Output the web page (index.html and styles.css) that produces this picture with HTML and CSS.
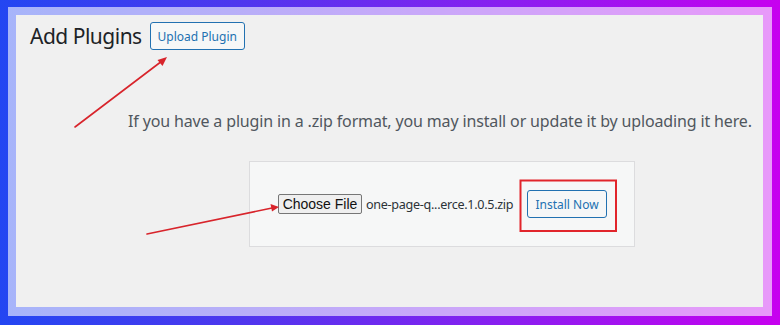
FILE: index.html
```html
<!DOCTYPE html>
<html lang="en">
<head>
<meta charset="utf-8">
<title>Add Plugins</title>
<link rel="stylesheet" href="styles.css">
</head>
<body>
<div class="page">
  <div class="frame">
    <div class="title-row">
      <h1 class="title">Add Plugins</h1>
      <button class="wp-btn upload-btn" type="button">Upload Plugin</button>
    </div>
    <p class="help">If you have a plugin in a .zip format, you may install or update it by uploading it here.</p>
    <form class="upload-form">
      <button class="file-btn" type="button">Choose File</button>
      <span class="file-name">one-page-q...erce.1.0.5.zip</span>
      <button class="wp-btn install-btn" type="button">Install Now</button>
    </form>
  </div>
  <svg class="notes" width="780" height="325" viewBox="0 0 780 325" aria-hidden="true">
    <g stroke="#d8242b" stroke-width="1.6" fill="none" stroke-linecap="round">
      <line x1="75" y1="127" x2="162" y2="61"/>
      <line x1="147" y1="234" x2="272" y2="208"/>
    </g>
    <g fill="#d8242b">
      <polygon points="167,57 157.5,60 162.5,66"/>
      <polygon points="279,207 270.5,204 272,211.5"/>
    </g>
    <rect x="520.5" y="180.5" width="95.5" height="50.5" fill="none" stroke="#e1252b" stroke-width="2"/>
  </svg>
</div>
</body>
</html>
```
FILE: styles.css
```css
* { box-sizing: border-box; }
html, body { margin: 0; padding: 0; }
body {
  width: 780px;
  height: 325px;
  overflow: hidden;
  font-family: "Noto Sans", "Open Sans", sans-serif;
}
.page {
  position: relative;
  width: 780px;
  height: 325px;
  padding: 7px 8px 9px 8px;
  background: linear-gradient(90deg, #2346f2 0%, #4d37ee 30%, #8a1ef0 65%, #c700ef 100%);
}
.frame {
  width: 764px;
  height: 309px;
  border: 8px solid rgba(255, 255, 255, 0.6);
  border-right-width: 9px;
  border-bottom-width: 9px;
  background: #f0f0f0;
  background-clip: padding-box;
  padding: 7px 0 0 14px;
}
.title-row {
  display: flex;
  align-items: center;
  gap: 8px;
  height: 28px;
}
.title {
  margin: 0;
  font-size: 21px;
  font-weight: 400;
  color: #1d2327;
  line-height: 28px;
  letter-spacing: -0.5px;
}
.wp-btn {
  font-family: "Noto Sans", "Open Sans", sans-serif;
  font-size: 12px;
  color: #2271b1;
  background: #f6f7f7;
  border: 1px solid #2271b1;
  border-radius: 3px;
  height: 28px;
  padding: 0;
  text-align: center;
}
.upload-btn { width: 95px; }
.help {
  margin: 59px 0 0 98px;
  font-size: 16px;
  line-height: 24px;
  color: #50575e;
  white-space: nowrap;
  letter-spacing: -0.15px;
}
.upload-form {
  display: flex;
  align-items: center;
  width: 386px;
  height: 86px;
  margin: 28px 0 0 219px;
  padding: 0 27px 0 28px;
  background: #f6f7f7;
  border: 1px solid #dcdcde;
}
.file-btn {
  width: 84px;
  height: 20px;
  padding: 0;
  font-family: "Liberation Sans", Arial, sans-serif;
  font-size: 14px;
  color: #111;
  background: #efefef;
  border: 1px solid #767676;
  border-radius: 2px;
}
.file-name {
  margin-left: 4px;
  font-size: 12.6px;
  color: #2c3338;
  white-space: nowrap;
  width: 155px;
  letter-spacing: -0.3px;
}
.install-btn {
  width: 80px;
  margin-left: auto;
}
.notes {
  position: absolute;
  left: 0;
  top: 0;
  pointer-events: none;
}
```
